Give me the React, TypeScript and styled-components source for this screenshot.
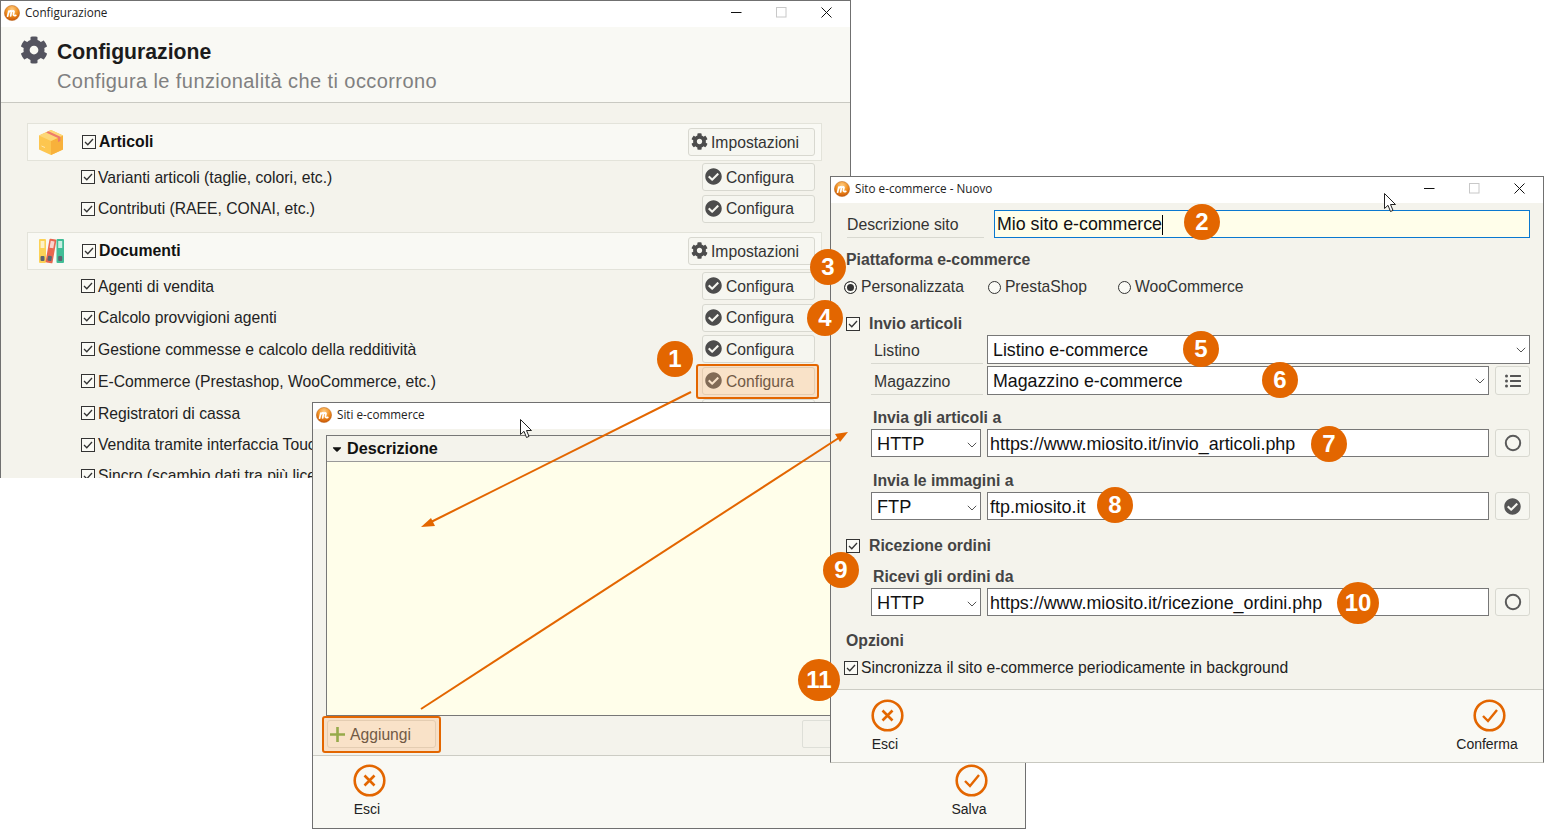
import React from "react";
import styled, { createGlobalStyle } from "styled-components";
import { FaCog, FaCheckCircle, FaListUl, FaCaretDown } from "react-icons/fa";

const Global = createGlobalStyle`
  html, body { margin: 0; padding: 0; background: #fff; }
  body { font-family: "Liberation Sans", Arial, sans-serif; color: #222; overflow: hidden; }
  #root { width: 1549px; height: 832px; }
`;

const ORANGE = "#e36600";

const Desktop = styled.div`
  position: relative;
  width: 1549px;
  height: 832px;
  overflow: hidden;
  background: #fff;
`;

const Window = styled.section<{ $x: number; $y: number; $w: number; $h: number; $z: number }>`
  position: absolute;
  left: ${(p) => p.$x}px;
  top: ${(p) => p.$y}px;
  width: ${(p) => p.$w}px;
  height: ${(p) => p.$h}px;
  z-index: ${(p) => p.$z};
  box-sizing: border-box;
  display: flex;
  flex-direction: column;
  overflow: hidden;
  background: #f4f3ec;
  border: 1px solid #707070;
`;

const MainWindow = styled(Window)`
  border-bottom: none;
`;

const FormWindow = styled(Window)`
  border-bottom: 1px solid #c8c8c0;
`;

const TitleBar = styled.header`
  flex: 0 0 26px;
  height: 26px;
  display: flex;
  align-items: center;
  background: #fff;
  padding: 0 0 3px 3px;
  box-sizing: border-box;
`;

const TitleText = styled.span`
  margin-left: 5px;
  margin-bottom: 1px;
  font-family: "Open Sans", sans-serif;
  font-size: 11.7px;
  color: #222;
  flex: 1;
  white-space: nowrap;
`;

const WinControls = styled.div`
  display: flex;
  align-items: center;
  width: 101px;
  margin-right: 18px;
  justify-content: space-between;
`;

const Logo = () => (
  <svg width="16" height="16" viewBox="0 0 16 16">
    <defs>
      <radialGradient id="lg" cx="50%" cy="28%" r="72%">
        <stop offset="0%" stopColor="#ffd08a" />
        <stop offset="55%" stopColor="#f08f20" />
        <stop offset="100%" stopColor="#c95505" />
      </radialGradient>
    </defs>
    <circle cx="8" cy="8" r="7.6" fill="url(#lg)" stroke="#b9651c" strokeWidth=".5" />
    <path d="M3.6 11.2L4.8 6.2M4.8 7.2Q6.8 5 7.4 6.6L6.7 10.8M7.3 7.2Q9.4 5 10 6.6L9.4 9.6Q9.4 11 11.8 10.4" fill="none" stroke="#fff" strokeWidth="1.7" strokeLinecap="round" />
  </svg>
);

const Controls = () => (
  <WinControls>
    <svg width="11" height="11" viewBox="0 0 11 11"><path d="M0 5.5H10.5" stroke="#111" strokeWidth="1" /></svg>
    <svg width="11" height="11" viewBox="0 0 11 11"><rect x=".5" y=".5" width="9.5" height="9.5" fill="none" stroke="#c8c8c8" /></svg>
    <svg width="11" height="11" viewBox="0 0 11 11"><path d="M.5.5L10.5 10.5M10.5.5L.5 10.5" stroke="#111" strokeWidth="1" /></svg>
  </WinControls>
);

const PageHeader = styled.div`
  flex: 0 0 76px;
  box-sizing: border-box;
  height: 76px;
  background: #f9f9f4;
  border-bottom: 1px solid #c9c9c2;
  display: flex;
  padding: 8px 0 0 19px;
`;

const GearWrap = styled.div`
  width: 37px;
  color: #54545f;
  font-size: 28px;
  line-height: 28px;
  height: 28px;
  margin-top: 1px;
`;

const PageTitle = styled.h1`
  margin: 3px 0 0;
  font-size: 21.2px;
  line-height: 28px;
  font-weight: 700;
  color: #1c1c1c;
`;

const PageSubtitle = styled.p`
  margin: 3px 0 0;
  font-size: 20px;
  line-height: 24px;
  color: #808080;
  letter-spacing: 0.42px;
`;

const MainBody = styled.div`
  padding: 20px 0 0 26px;
  display: flex;
  flex-direction: column;
`;

const Section = styled.div`
  box-sizing: border-box;
  width: 795px;
  height: 38px;
  background: #f9f9f4;
  border: 1px solid #e3e3da;
  display: flex;
  align-items: center;
  padding: 0 6px 0 10px;
`;

const SectionGap = styled.div`
  height: 8px;
  flex: none;
`;

const SectionIcon = styled.div`
  width: 44px;
  height: 28px;
  display: flex;
  align-items: center;
`;

const SectionName = styled.span`
  font-size: 15.8px;
  font-weight: 700;
  color: #111;
  margin-left: 3px;
  flex: 1;
`;

const FeatureRow = styled.div<{ $h: number }>`
  position: relative;
  height: ${(p) => p.$h}px;
  width: 788px;
  padding-left: 54px;
  box-sizing: border-box;
  display: flex;
  align-items: center;
  font-size: 15.7px;
  color: #222;
  white-space: nowrap;
`;

const FeatureText = styled.span`
  margin-left: 3px;
  padding-top: 1px;
  flex: 1;
`;

const Box = styled.span`
  flex: none;
  box-sizing: border-box;
  width: 14px;
  height: 14px;
  border: 1px solid #333;
  background: #fafaf5;
  display: inline-flex;
  align-items: center;
  justify-content: center;
`;

const Check = () => (
  <Box>
    <svg width="12" height="12" viewBox="0 0 12 12">
      <path d="M2 6L4.8 8.8L10 3" fill="none" stroke="#333" strokeWidth="1.3" />
    </svg>
  </Box>
);

const Btn = styled.button<{ $w: number }>`
  flex: none;
  box-sizing: border-box;
  width: ${(p) => p.$w}px;
  height: 28px;
  border: 1px solid #d8d8d0;
  border-radius: 3px;
  background: #f6f6f0;
  font-family: inherit;
  font-size: 15.7px;
  color: #333;
  display: flex;
  align-items: center;
  padding: 1px 0 0 3px;
  gap: 3px;
  position: relative;
`;

const ConfigBtn = styled(Btn)`
  gap: 4px;
`;

const BtnIcon = styled.span`
  display: inline-flex;
  color: #4c4c4c;
  font-size: 17px;
  margin-left: -1px;
  margin-top: -2px;
`;

const Highlight = styled.span<{ $t: number; $r: number; $b: number; $l: number }>`
  position: absolute;
  top: -${(p) => p.$t}px;
  right: -${(p) => p.$r}px;
  bottom: -${(p) => p.$b}px;
  left: -${(p) => p.$l}px;
  border: 2px solid ${ORANGE};
  border-radius: 3px;
  background: rgba(255, 180, 110, 0.3);
  pointer-events: none;
`;

const ListHead = styled.div`
  margin: 6px 0 0 13px;
  box-sizing: border-box;
  width: 800px;
  flex: 0 0 281px;
  border: 1px solid #777;
  background: #fffeea;
  display: flex;
  flex-direction: column;
`;

const ColHead = styled.div`
  height: 26px;
  box-sizing: border-box;
  background: #f4f3ec;
  border-bottom: 1px solid #999;
  display: flex;
  align-items: center;
  padding-left: 3px;
  font-size: 16.2px;
  font-weight: 700;
  color: #111;
  gap: 3px;
`;

const ListToolbar = styled.div`
  flex: 0 0 40px;
  box-sizing: border-box;
  border-bottom: 1px solid #ccccc4;
  display: flex;
  align-items: flex-start;
  justify-content: space-between;
  padding: 4px 0 0 14px;
`;

const AddBtn = styled(Btn)`
  padding-left: 1px;
  gap: 4px;
`;

const GhostBtn = styled.div`
  width: 110px;
  height: 28px;
  box-sizing: border-box;
  border: 1px solid #dedfd8;
  border-radius: 2px;
  margin-right: 113px;
`;

const Footer = styled.footer`
  flex: 1;
  background: #f9f9f4;
  display: flex;
  justify-content: space-between;
`;

const FooterAction = styled.div<{ $w: number; $ml?: number; $mr?: number; $pt: number }>`
  width: ${(p) => p.$w}px;
  margin-left: ${(p) => p.$ml ?? 0}px;
  margin-right: ${(p) => p.$mr ?? 0}px;
  display: flex;
  flex-direction: column;
  align-items: center;
  font-size: 14px;
  color: #222;
  padding-top: ${(p) => p.$pt}px;
`;

const ActionLabel = styled.span`
  margin-top: 4px;
  line-height: 16px;
  margin-right: 4px;
`;

const CancelIcon = () => (
  <svg width="33" height="33" viewBox="0 0 33 33">
    <circle cx="16.5" cy="16.5" r="14.8" fill="none" stroke={ORANGE} strokeWidth="2.6" />
    <path d="M11.5 11.5L21.5 21.5M21.5 11.5L11.5 21.5" stroke={ORANGE} strokeWidth="2.6" />
  </svg>
);

const ConfirmIcon = () => (
  <svg width="33" height="33" viewBox="0 0 33 33">
    <circle cx="16.5" cy="16.5" r="14.8" fill="none" stroke={ORANGE} strokeWidth="2.6" />
    <path d="M10 17L15 22L24 11" fill="none" stroke={ORANGE} strokeWidth="2.4" />
  </svg>
);

const FormBody = styled.div`
  padding: 7px 13px 0 16px;
  flex: 0 0 487px;
  box-sizing: border-box;
  border-bottom: 1px solid #ccccc4;
  display: flex;
  flex-direction: column;
`;

const Line = styled.div<{ $mt: number; $ml?: number; $h?: number }>`
  margin-top: ${(p) => p.$mt}px;
  margin-left: ${(p) => p.$ml ?? 0}px;
  height: ${(p) => p.$h ?? 28}px;
  display: flex;
  align-items: center;
  gap: 6px;
  flex: none;
`;

const Label = styled.div<{ $w: number; $pl?: number; $mr: number }>`
  box-sizing: border-box;
  width: ${(p) => p.$w}px;
  height: 100%;
  padding-left: ${(p) => p.$pl ?? 0}px;
  padding-top: 3px;
  margin-right: ${(p) => p.$mr}px;
  border-bottom: 1px solid #d8d8d0;
  display: flex;
  align-items: center;
  font-size: 15.8px;
  color: #333;
`;

const Heading = styled.div<{ $mt: number; $ml?: number }>`
  box-sizing: border-box;
  margin-top: ${(p) => p.$mt}px;
  margin-left: ${(p) => p.$ml ?? -1}px;
  height: 18px;
  padding-top: 4px;
  line-height: 16px;
  font-size: 15.8px;
  font-weight: 700;
  color: #444;
  display: flex;
  align-items: center;
  flex: none;
`;

const CheckGap = styled.span`
  width: 9px;
`;

const Field = styled.div<{ $w?: number; $focus?: boolean }>`
  box-sizing: border-box;
  ${(p) => (p.$w ? `width:${p.$w}px;flex:none;` : "flex:1;")}
  height: 100%;
  border: 1px solid ${(p) => (p.$focus ? "#0a78d0" : "#777")};
  background: ${(p) => (p.$focus ? "#fffeea" : "#fff")};
  display: flex;
  align-items: center;
  justify-content: space-between;
  font-size: 17.8px;
  color: #111;
  padding: 1px 3px 0 ${(p) => (p.$focus ? 2 : 5)}px;
  white-space: nowrap;
`;

const ProtoField = styled(Field)`
  padding-top: 3px;
  font-size: 18.2px;
`;

const UrlField = styled(Field)`
  padding-left: 2px;
  padding-top: 3px;
  font-size: 17.9px;
`;

const Caret = styled.span`
  display: inline-block;
  width: 1px;
  height: 20px;
  background: #000;
  vertical-align: middle;
`;

const Chevron = () => (
  <svg width="10" height="6" viewBox="0 0 10 6"><path d="M.8.8L5 5L9.2.8" fill="none" stroke="#555" strokeWidth="1" /></svg>
);

const Side = styled.div`
  flex: none;
  box-sizing: border-box;
  width: 35px;
  height: 100%;
  border: 1px solid #d8d8d0;
  border-radius: 3px;
  background: #f6f6f0;
  display: flex;
  align-items: center;
  justify-content: center;
  color: #555;
  font-size: 16px;
`;

const Ring = () => (
  <svg width="18" height="18" viewBox="0 0 18 18"><circle cx="9" cy="9" r="7.2" fill="none" stroke="#5a5a5a" strokeWidth="2" /></svg>
);

const Radios = styled.div`
  margin: 10px 0 0 -3px;
  height: 20px;
  display: flex;
  align-items: center;
  font-size: 15.7px;
  color: #333;
  flex: none;
`;

const RadioDot = styled.span<{ $on?: boolean; $ml?: number }>`
  flex: none;
  box-sizing: border-box;
  width: 13px;
  height: 13px;
  border-radius: 50%;
  border: 1px solid #333;
  background: ${(p) => (p.$on ? "#333" : "#fafaf5")};
  box-shadow: ${(p) => (p.$on ? "inset 0 0 0 2px #fafaf5" : "none")};
  margin-left: ${(p) => p.$ml ?? 0}px;
  margin-right: 4px;
`;

const OptionRow = styled.div`
  margin: 10px 0 0 -3px;
  height: 20px;
  display: flex;
  align-items: center;
  font-size: 15.7px;
  color: #222;
  gap: 3px;
  flex: none;
`;

const ArrowLayer = styled.svg`
  position: absolute;
  inset: 0;
  z-index: 5;
  pointer-events: none;
`;

const Badge = styled.div<{ $x: number; $y: number; $d?: number }>`
  position: absolute;
  z-index: 6;
  left: ${(p) => p.$x - (p.$d ?? 36) / 2}px;
  top: ${(p) => p.$y - (p.$d ?? 36) / 2}px;
  width: ${(p) => p.$d ?? 36}px;
  height: ${(p) => p.$d ?? 36}px;
  border-radius: 50%;
  background: ${ORANGE};
  color: #fff;
  font-size: 24px;
  font-weight: 700;
  display: flex;
  align-items: center;
  justify-content: center;
`;

const Pointer = styled.svg<{ $x: number; $y: number }>`
  position: absolute;
  left: ${(p) => p.$x}px;
  top: ${(p) => p.$y}px;
  z-index: 7;
`;

const Cursor = ({ x, y }: { x: number; y: number }) => (
  <Pointer $x={x} $y={y} width="13" height="20" viewBox="0 0 13 20">
    <path d="M.5.5V15.5L4 12.3L6.5 18.5L9 17.4L6.5 11.5H11.5Z" fill="#fff" stroke="#222" strokeWidth="1" />
  </Pointer>
);

const BoxIcon = () => (
  <svg width="26" height="27" viewBox="0 0 26 27">
    <path d="M13 1L25 6.5V20.5L13 26L1 20.5V6.5Z" fill="#fdc64f" />
    <path d="M13 12L25 6.5V20.5L13 26Z" fill="#f8b13b" />
    <path d="M13 1L25 6.5L13 12L1 6.5Z" fill="#fdd777" />
    <path d="M8 3.4L20 9V13L22.4 12V7.7L10.5 2.2Z" fill="#ee7a6b" />
    <path d="M3.5 17L7 18.5" stroke="#fde7ae" strokeWidth="1" />
  </svg>
);

const BindersIcon = () => (
  <svg width="27" height="26" viewBox="0 0 27 26">
    <rect x="1" y="1" width="7" height="24" rx="1" fill="#fcd257" />
    <rect x="2.6" y="3" width="3.8" height="7" fill="#fdf1c8" />
    <rect x="2.5" y="18" width="4" height="5" rx="1" fill="#5d6470" />
    <g transform="rotate(10 13 13)">
      <rect x="9.5" y="1" width="7" height="24" rx="1" fill="#e8664f" />
      <rect x="11" y="3" width="3.8" height="7" fill="#f9d2cd" />
      <rect x="11" y="18" width="4" height="5" rx="1" fill="#5d6470" />
    </g>
    <rect x="18.5" y="1" width="7.5" height="24" rx="1" fill="#41bd96" />
    <rect x="20.2" y="3" width="4" height="7" fill="#c9eee2" />
    <rect x="20.2" y="18" width="4" height="5" rx="1" fill="#5d6470" />
  </svg>
);

const Configure = ({ on }: { on?: boolean }) => (
  <ConfigBtn $w={113}>
    <BtnIcon><FaCheckCircle /></BtnIcon>
    Configura
    {on && <Highlight $t={4} $r={5} $b={5} $l={7} />}
  </ConfigBtn>
);

const Settings = () => (
  <Btn $w={127}>
    <BtnIcon><FaCog /></BtnIcon>
    Impostazioni
  </Btn>
);

const features1: [string, number][] = [
  ["Varianti articoli (taglie, colori, etc.)", 32],
  ["Contributi (RAEE, CONAI, etc.)", 31],
];
const features2: [string, number][] = [
  ["Agenti di vendita", 32],
  ["Calcolo provvigioni agenti", 31],
  ["Gestione commesse e calcolo della redditività", 32],
  ["E-Commerce (Prestashop, WooCommerce, etc.)", 32],
  ["Registratori di cassa", 32],
  ["Vendita tramite interfaccia Touch screen", 31],
  ["Sincro (scambio dati tra più licenze)", 31],
];

const badges: [string, number, number, number?][] = [
  ["1", 675, 359], ["2", 1202, 222], ["3", 828, 267], ["4", 825, 318], ["5", 1201, 349],
  ["6", 1280, 380], ["7", 1329, 444], ["8", 1115, 505], ["9", 841, 570], ["10", 1358, 603, 42], ["11", 819, 680, 42],
];

export default function App() {
  return (
    <Desktop>
      <Global />
      <MainWindow $x={0} $y={0} $w={851} $h={478} $z={1}>
        <TitleBar>
          <Logo />
          <TitleText>Configurazione</TitleText>
          <Controls />
        </TitleBar>
        <PageHeader>
          <GearWrap><FaCog /></GearWrap>
          <div>
            <PageTitle>Configurazione</PageTitle>
            <PageSubtitle>Configura le funzionalità che ti occorrono</PageSubtitle>
          </div>
        </PageHeader>
        <MainBody>
          <Section>
            <SectionIcon><BoxIcon /></SectionIcon>
            <Check />
            <SectionName>Articoli</SectionName>
            <Settings />
          </Section>
          {features1.map(([t, h]) => (
            <FeatureRow key={t} $h={h}>
              <Check />
              <FeatureText>{t}</FeatureText>
              <Configure />
            </FeatureRow>
          ))}
          <SectionGap />
          <Section>
            <SectionIcon><BindersIcon /></SectionIcon>
            <Check />
            <SectionName>Documenti</SectionName>
            <Settings />
          </Section>
          {features2.map(([t, h], i) => (
            <FeatureRow key={t} $h={h}>
              <Check />
              <FeatureText>{t}</FeatureText>
              <Configure on={i === 3} />
            </FeatureRow>
          ))}
        </MainBody>
      </MainWindow>

      <Window $x={312} $y={402} $w={714} $h={427} $z={2}>
        <TitleBar>
          <Logo />
          <TitleText>Siti e-commerce</TitleText>
        </TitleBar>
        <ListHead>
          <ColHead><FaCaretDown size={14} />Descrizione</ColHead>
        </ListHead>
        <ListToolbar>
          <AddBtn $w={109}>
            <svg width="17" height="17" viewBox="0 0 17 17"><path d="M8.5 1V16M1 8.5H16" stroke="#6aa63c" strokeWidth="2.6" /></svg>
            Aggiungi
            <Highlight $t={5} $r={6} $b={6} $l={6} />
          </AddBtn>
          <GhostBtn />
        </ListToolbar>
        <Footer>
          <FooterAction $w={60} $ml={26} $pt={8}><CancelIcon /><ActionLabel>Esci</ActionLabel></FooterAction>
          <FooterAction $w={60} $mr={24} $pt={8}><ConfirmIcon /><ActionLabel>Salva</ActionLabel></FooterAction>
        </Footer>
      </Window>

      <FormWindow $x={830} $y={176} $w={714} $h={587} $z={3}>
        <TitleBar>
          <Logo />
          <TitleText>Sito e-commerce - Nuovo</TitleText>
          <Controls />
        </TitleBar>
        <FormBody>
          <Line $mt={0}>
            <Label $w={137} $mr={4}>Descrizione sito</Label>
            <Field $focus>
              <span>Mio sito e-commerce<Caret /></span>
            </Field>
          </Line>
          <Heading $mt={11}>Piattaforma e-commerce</Heading>
          <Radios>
            <RadioDot $on />Personalizzata
            <RadioDot $ml={24} />PrestaShop
            <RadioDot $ml={31} />WooCommerce
          </Radios>
          <Heading $mt={16}><Check /><CheckGap />Invio articoli</Heading>
          <Line $mt={4} $ml={24} $h={29}>
            <Label $w={112} $pl={3} $mr={-2}>Listino</Label>
            <Field><span>Listino e-commerce</span><Chevron /></Field>
          </Line>
          <Line $mt={2} $ml={24} $h={29}>
            <Label $w={112} $pl={3} $mr={-2}>Magazzino</Label>
            <Field><span>Magazzino e-commerce</span><Chevron /></Field>
            <Side><FaListUl /></Side>
          </Line>
          <Heading $mt={12} $ml={26}>Invia gli articoli a</Heading>
          <Line $mt={4} $ml={24}>
            <ProtoField $w={110}><span>HTTP</span><Chevron /></ProtoField>
            <UrlField><span>https://www.miosito.it/invio_articoli.php</span></UrlField>
            <Side><Ring /></Side>
          </Line>
          <Heading $mt={13} $ml={26}>Invia le immagini a</Heading>
          <Line $mt={4} $ml={24}>
            <ProtoField $w={110}><span>FTP</span><Chevron /></ProtoField>
            <UrlField><span>ftp.miosito.it</span></UrlField>
            <Side><FaCheckCircle size={17} /></Side>
          </Line>
          <Heading $mt={15}><Check /><CheckGap />Ricezione ordini</Heading>
          <Heading $mt={13} $ml={26}>Ricevi gli ordini da</Heading>
          <Line $mt={4} $ml={24}>
            <ProtoField $w={110}><span>HTTP</span><Chevron /></ProtoField>
            <UrlField><span>https://www.miosito.it/ricezione_ordini.php</span></UrlField>
            <Side><Ring /></Side>
          </Line>
          <Heading $mt={14}>Opzioni</Heading>
          <OptionRow><Check />Sincronizza il sito e-commerce periodicamente in background</OptionRow>
        </FormBody>
        <Footer>
          <FooterAction $w={60} $ml={26} $pt={9}><CancelIcon /><ActionLabel>Esci</ActionLabel></FooterAction>
          <FooterAction $w={80} $mr={14} $pt={9}><ConfirmIcon /><ActionLabel>Conferma</ActionLabel></FooterAction>
        </Footer>
      </FormWindow>

      <ArrowLayer width="1549" height="832" viewBox="0 0 1549 832">
        <path d="M691 392L428 523.5" stroke={ORANGE} strokeWidth="2" fill="none" />
        <path d="M421 527L431 518L435 526Z" fill={ORANGE} />
        <path d="M421 709L841 436.5" stroke={ORANGE} strokeWidth="2" fill="none" />
        <path d="M848 432L840 442L835 434Z" fill={ORANGE} />
      </ArrowLayer>

      {badges.map(([n, x, y, d]) => (
        <Badge key={n} $x={x} $y={y} $d={d}>{n}</Badge>
      ))}
      <Cursor x={1384} y={193} />
      <Cursor x={520} y={419} />
    </Desktop>
  );
}
